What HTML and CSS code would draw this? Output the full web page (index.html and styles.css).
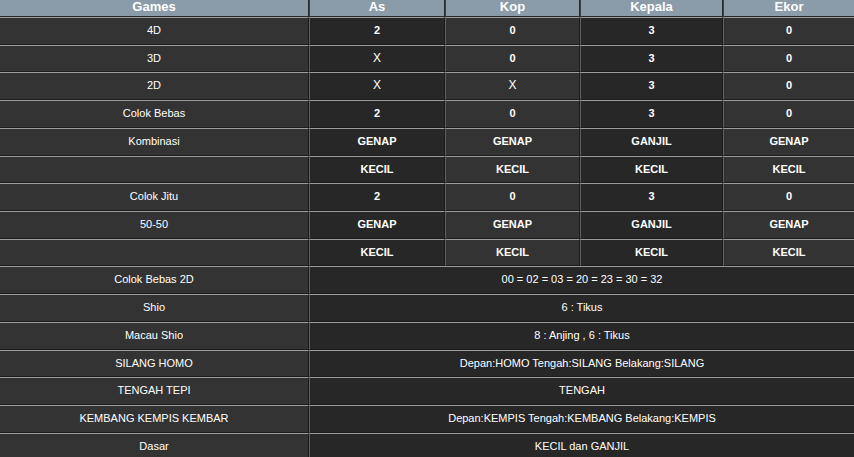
FILE: index.html
```html
<!DOCTYPE html>
<html>
<head>
<meta charset="utf-8">
<link rel="stylesheet" href="styles.css">
</head>
<body>
<table class="result">
  <colgroup>
    <col class="c-games"><col class="c-as"><col class="c-kop"><col class="c-kepala"><col class="c-ekor">
  </colgroup>
  <thead>
    <tr><th>Games</th><th>As</th><th>Kop</th><th>Kepala</th><th>Ekor</th></tr>
  </thead>
  <tbody>
    <tr><td class="lbl">4D</td><td class="v dk">2</td><td class="v">0</td><td class="v dk">3</td><td class="v">0</td></tr>
    <tr><td class="lbl">3D</td><td class="v dk x">X</td><td class="v">0</td><td class="v dk">3</td><td class="v">0</td></tr>
    <tr><td class="lbl">2D</td><td class="v dk x">X</td><td class="v x">X</td><td class="v dk">3</td><td class="v">0</td></tr>
    <tr><td class="lbl">Colok Bebas</td><td class="v dk">2</td><td class="v">0</td><td class="v dk">3</td><td class="v">0</td></tr>
    <tr><td class="lbl">Kombinasi</td><td class="v dk">GENAP</td><td class="v">GENAP</td><td class="v dk">GANJIL</td><td class="v">GENAP</td></tr>
    <tr><td class="lbl"></td><td class="v dk">KECIL</td><td class="v">KECIL</td><td class="v dk">KECIL</td><td class="v">KECIL</td></tr>
    <tr><td class="lbl">Colok Jitu</td><td class="v dk">2</td><td class="v">0</td><td class="v dk">3</td><td class="v">0</td></tr>
    <tr><td class="lbl">50-50</td><td class="v dk">GENAP</td><td class="v">GENAP</td><td class="v dk">GANJIL</td><td class="v">GENAP</td></tr>
    <tr><td class="lbl"></td><td class="v dk">KECIL</td><td class="v">KECIL</td><td class="v dk">KECIL</td><td class="v">KECIL</td></tr>
    <tr><td class="lbl">Colok Bebas 2D</td><td class="wide" colspan="4">00 = 02 = 03 = 20 = 23 = 30 = 32</td></tr>
    <tr><td class="lbl">Shio</td><td class="wide" colspan="4">6 : Tikus</td></tr>
    <tr><td class="lbl">Macau Shio</td><td class="wide" colspan="4">8 : Anjing , 6 : Tikus</td></tr>
    <tr><td class="lbl">SILANG HOMO</td><td class="wide" colspan="4">Depan:HOMO Tengah:SILANG Belakang:SILANG</td></tr>
    <tr><td class="lbl">TENGAH TEPI</td><td class="wide" colspan="4">TENGAH</td></tr>
    <tr><td class="lbl">KEMBANG KEMPIS KEMBAR</td><td class="wide" colspan="4">Depan:KEMPIS Tengah:KEMBANG Belakang:KEMPIS</td></tr>
    <tr><td class="lbl">Dasar</td><td class="wide" colspan="4">KECIL dan GANJIL</td></tr>
  </tbody>
</table>
</body>
</html>
```
FILE: styles.css
```css
html, body {
  margin: 0;
  padding: 0;
  background: #2b2b2b;
}
body {
  font-family: "Liberation Sans", Arial, sans-serif;
  color: #ffffff;
  overflow: hidden;
}
.result {
  width: 854px;
  table-layout: fixed;
  border-collapse: separate;
  border-spacing: 0;
}
.c-games { width: 309px; }
.c-as { width: 136px; }
.c-kop { width: 135px; }
.c-kepala { width: 143px; }
.c-ekor { width: 131px; }

.result th {
  background: #8a9ca9;
  color: #ffffff;
  font-size: 13px;
  font-weight: bold;
  height: 17px;
  line-height: 14px;
  padding: 0 0 2px;
  text-align: center;
  border-right: 1px solid #2a2d30;
  border-left: 1px solid #3a3f44;
  border-bottom: 1px solid #2a2a2a;
  box-sizing: border-box;
}
.result th:first-child { border-left: 0; }
.result th:last-child { border-right: 0; }

.result td {
  padding: 0;
  text-align: center;
  font-size: 11px;
  line-height: 25.72px;
  background: #333333;
  border-top: 1px solid #9c9c9c;
  border-bottom: 1px solid #1c1c1c;
  border-left: 1px solid #5e5e5e;
  border-right: 1px solid #1c1c1c;
  white-space: nowrap;
}
.result td:first-child { border-left: 0; }
.result td:last-child { border-right: 0; }
.result td.dk, .result td.wide { background: #272727; }
.result td.v { font-weight: bold; }
.result td.x { font-weight: normal; font-size: 12px; }
```
